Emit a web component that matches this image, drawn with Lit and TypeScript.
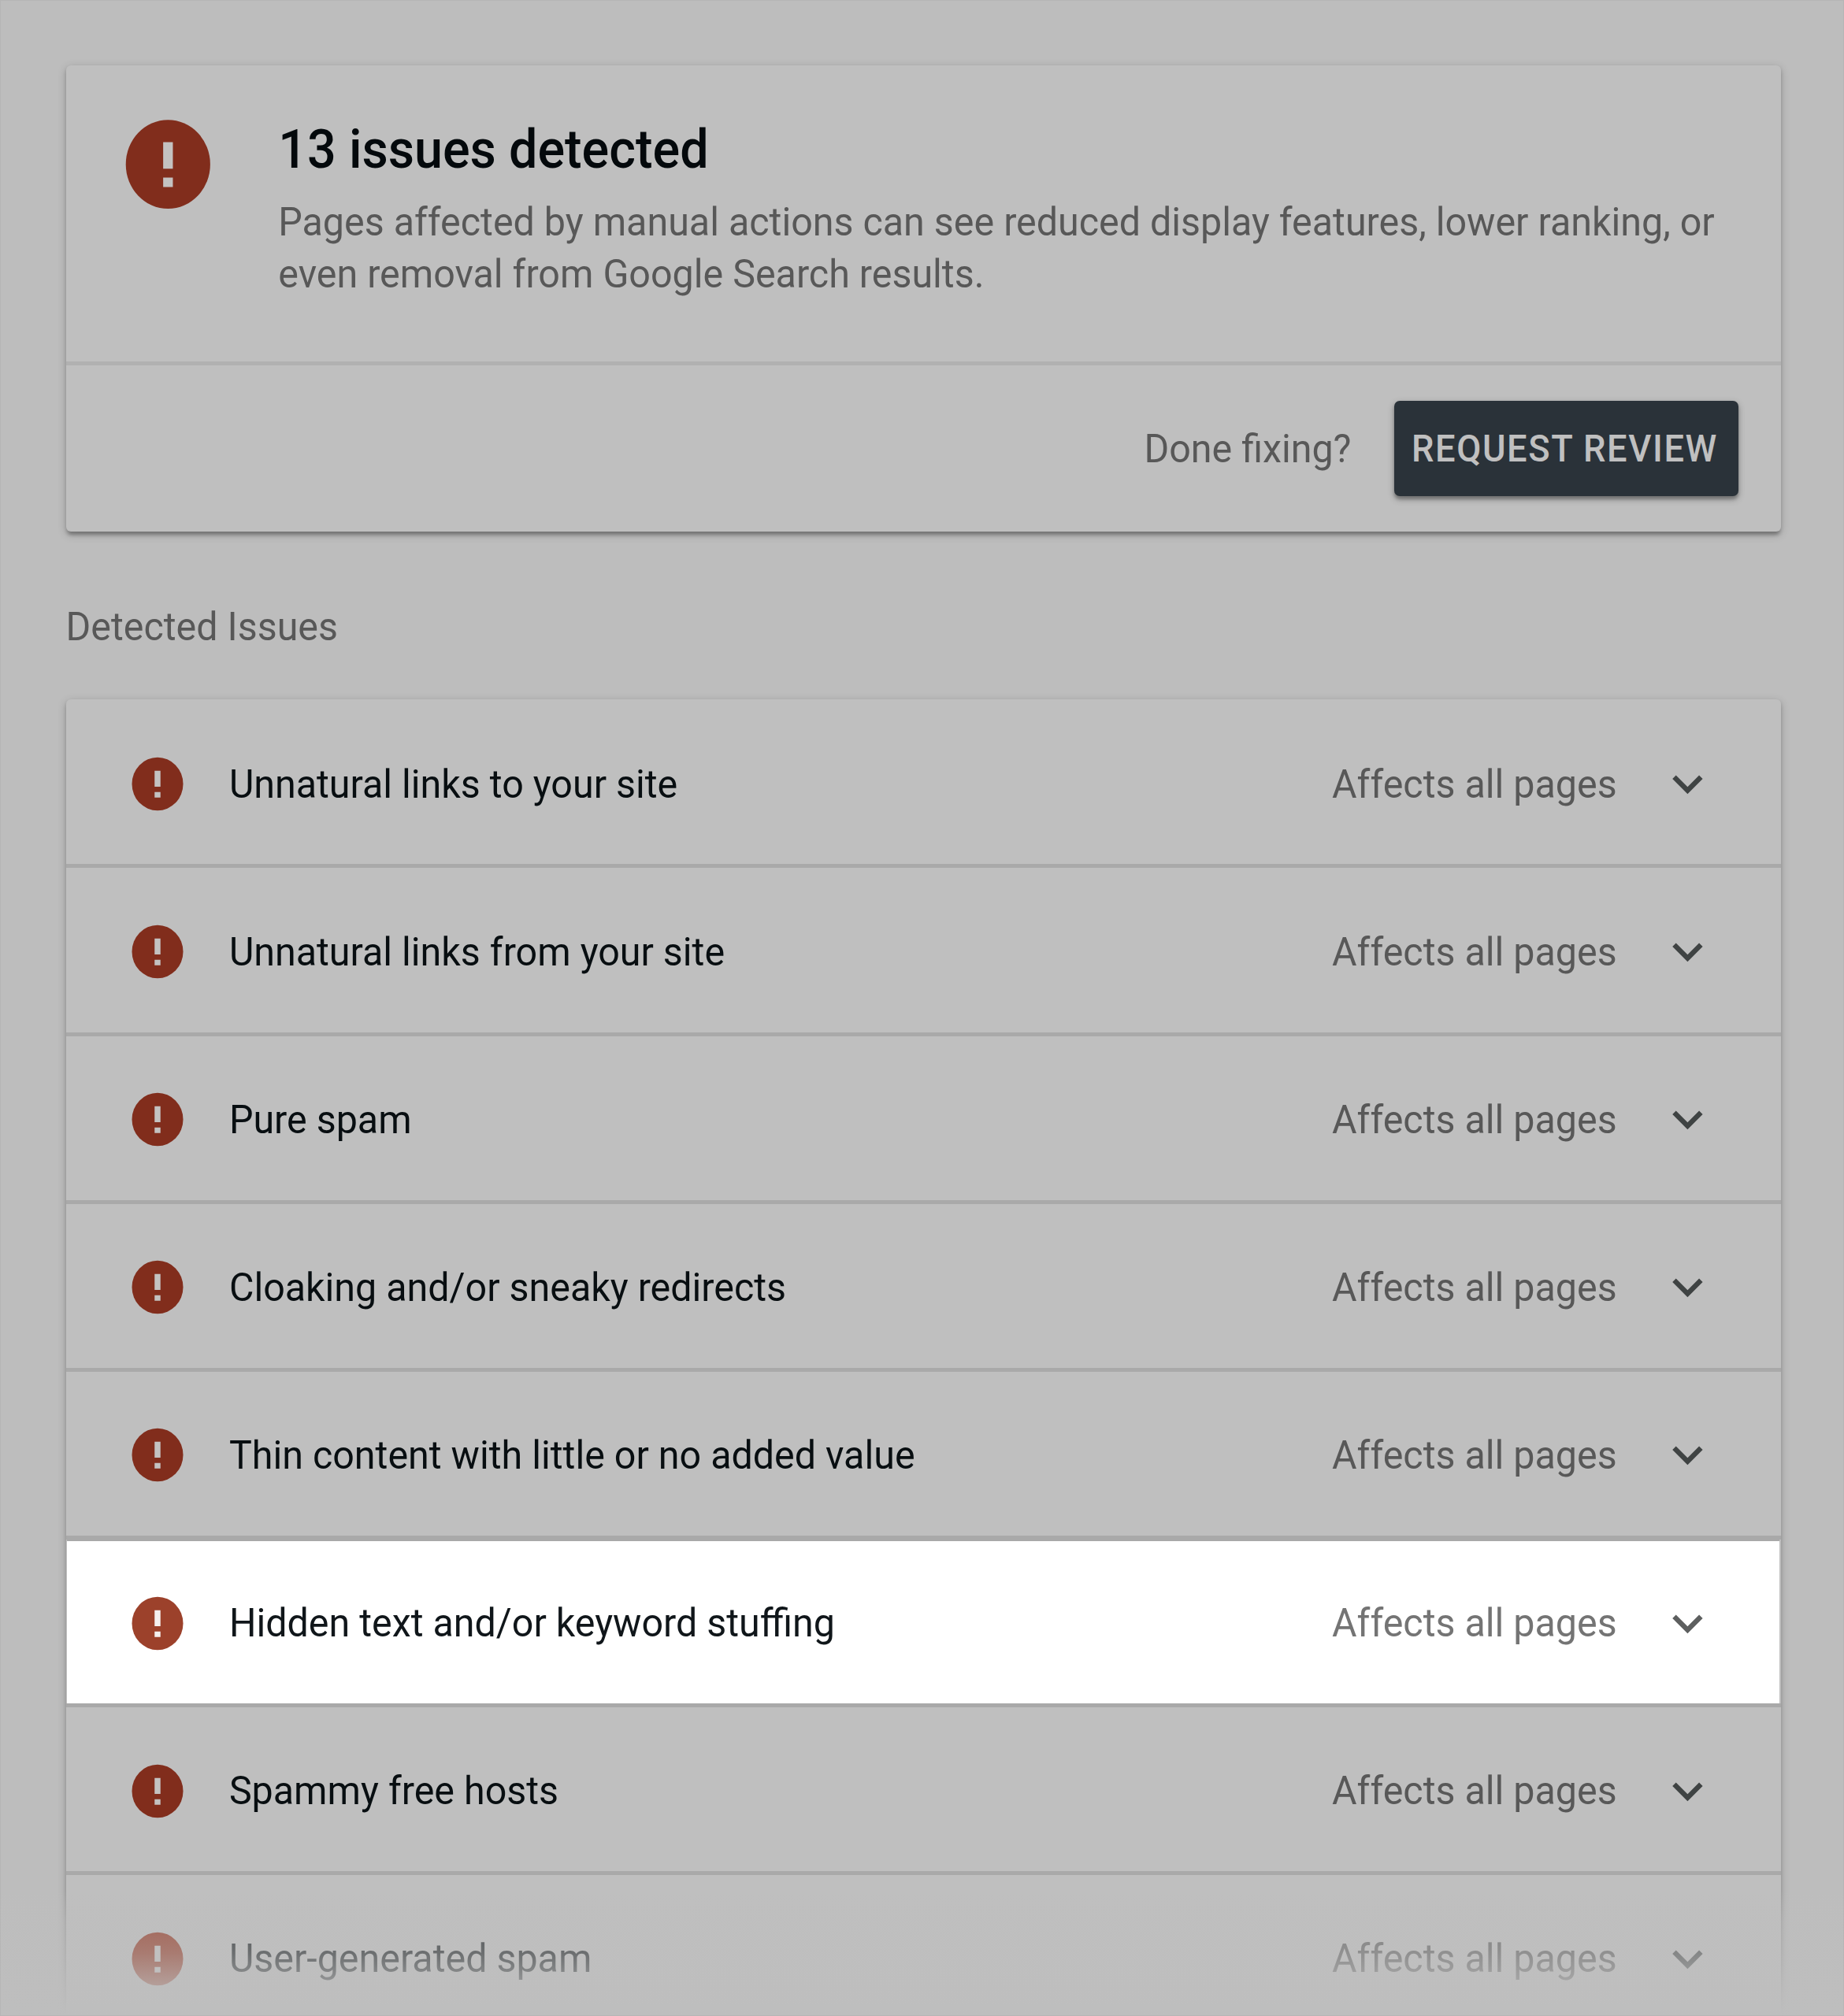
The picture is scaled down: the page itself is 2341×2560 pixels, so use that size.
import { LitElement, html, css } from "lit";
import { customElement, property } from "lit/decorators.js";
import { classMap } from "lit/directives/class-map.js";

interface Issue {
  title: string;
  scope: string;
  highlighted?: boolean;
  fading?: boolean;
}

const ISSUES: Issue[] = [
  { title: "Unnatural links to your site", scope: "Affects all pages" },
  { title: "Unnatural links from your site", scope: "Affects all pages" },
  { title: "Pure spam", scope: "Affects all pages" },
  { title: "Cloaking and/or sneaky redirects", scope: "Affects all pages" },
  { title: "Thin content with little or no added value", scope: "Affects all pages" },
  { title: "Hidden text and/or keyword stuffing", scope: "Affects all pages", highlighted: true },
  { title: "Spammy free hosts", scope: "Affects all pages" },
  { title: "User-generated spam", scope: "Affects all pages", fading: true },
];

@customElement("error-icon")
export class ErrorIcon extends LitElement {
  static styles = css`
    :host {
      display: block;
      flex: none;
    }
    svg {
      display: block;
      width: 100%;
      height: 100%;
    }
    .disc {
      fill: var(--disc, #812d1c);
    }
    .mark {
      fill: var(--mark, #c4c2c1);
    }
  `;

  render() {
    return html`
      <svg viewBox="0 0 24 24" preserveAspectRatio="none" aria-hidden="true">
        <circle class="disc" cx="12" cy="12" r="10" />
        <path class="mark" d="M10.85 7h2.3v6h-2.3zM10.85 15h2.3v2.1h-2.3z" />
      </svg>
    `;
  }
}

@customElement("issue-row")
export class IssueRow extends LitElement {
  @property({ attribute: false }) issue!: Issue;

  static styles = css`
    :host {
      display: block;
      height: 213.1px;
      box-sizing: border-box;
      border-bottom: 5px solid #a9a9a9;
      font-size: 48.4px;
      line-height: 56px;
    }
    .row {
      display: flex;
      align-items: center;
      height: 100%;
      box-sizing: border-box;
      padding: 4.2px 79.3px 0 77.6px;
      color: #080e11;
    }
    error-icon {
      width: 78px;
      height: 81px;
      margin-right: 51.8px;
    }
    .title,
    .scope {
      white-space: nowrap;
      transform: scaleY(1.05);
    }
    .title {
      flex: 1;
    }
    .scope {
      color: #585858;
      margin-right: 51.8px;
    }
    .chevron {
      width: 76.8px;
      height: 77px;
      fill: #3f4343;
    }
    .highlighted {
      --disc: #9c412b;
      --mark: #f4efee;
      color: #10161a;
      background: linear-gradient(#a9a9a9 2px, #fff 2px);
      margin: 0 1.5px;
      padding: 4.2px 77.8px 0 76.1px;
    }
    .highlighted .scope {
      color: #747474;
    }
    .highlighted .chevron {
      fill: #5d5f5f;
    }
    .fading {
      --disc: #8f2a14;
    }
  `;

  render() {
    const { title, scope, highlighted, fading } = this.issue;
    return html`
      <div class=${classMap({ row: true, highlighted: !!highlighted, fading: !!fading })}>
        <error-icon></error-icon>
        <span class="title">${title}</span>
        <span class="scope">${scope}</span>
        <svg class="chevron" viewBox="0 0 24 24" aria-hidden="true">
          <path d="M16.59 8.59 12 13.17 7.41 8.59 6 10l6 6 6-6z" />
        </svg>
      </div>
    `;
  }
}

@customElement("app-root")
export class AppRoot extends LitElement {
  static styles = css`
    :host {
      display: block;
      font-family: Roboto, "Liberation Sans", sans-serif;
    }
    .page {
      position: relative;
      box-sizing: border-box;
      width: 2341px;
      height: 2560px;
      overflow: hidden;
      padding: 83px 80.5px 0 83.5px;
      background: #bdbdbd;
    }
    .card {
      background: #bfbfbf;
      border-radius: 6px;
      box-shadow:
        0 3.5px 4px rgba(0, 0, 0, 0.16),
        0 7px 4px -3px rgba(0, 0, 0, 0.14),
        0 3.5px 12px rgba(0, 0, 0, 0.2);
    }
    .summary {
      height: 592px;
      display: flex;
      flex-direction: column;
    }
    .overview {
      display: flex;
      gap: 76px;
      height: 376px;
      box-sizing: border-box;
      padding: 57.5px 58px 0 65.2px;
    }
    .overview error-icon {
      width: 128.6px;
      height: 135.4px;
    }
    .copy {
      padding-top: 11.4px;
    }
    h1 {
      margin: 0;
      font-size: 64.7px;
      line-height: 76px;
      font-weight: 500;
      color: #04090c;
      transform: scaleY(1.05);
    }
    p {
      margin: 23.8px 0 0;
      font-size: 48.4px;
      line-height: 63.3px;
      color: #585858;
      white-space: nowrap;
      transform: scaleY(1.05);
    }
    .actions {
      flex: 1;
      display: flex;
      align-items: center;
      justify-content: flex-end;
      gap: 54px;
      padding-right: 54px;
      border-top: 5px solid #b1b1b1;
    }
    .hint {
      font-size: 48.4px;
      color: #585858;
      transform: scaleY(1.05);
    }
    button {
      width: 437px;
      height: 120.5px;
      padding: 0 0 0 22.5px;
      border: 0;
      border-radius: 7px;
      background: #2a3239;
      color: #c0c0c0;
      font: 500 45.2px Roboto, "Liberation Sans", sans-serif;
      letter-spacing: 1.6px;
      text-align: left;
      white-space: nowrap;
      box-shadow:
        0 3.5px 3.5px rgba(0, 0, 0, 0.2),
        0 3.5px 9px rgba(0, 0, 0, 0.3);
    }
    .label {
      display: inline-block;
      transform: scaleY(1.05);
    }
    h2 {
      margin: 0;
      height: 213px;
      box-sizing: border-box;
      padding-top: 93px;
      font-size: 48.4px;
      line-height: 56px;
      font-weight: 400;
      color: #585858;
    }
    .list {
      padding-top: 1.4px;
    }
    /* Fades the end of the list into the page. */
    .fade {
      position: absolute;
      left: 0;
      right: 0;
      bottom: 0;
      height: 160px;
      background: linear-gradient(
        rgba(190, 190, 190, 0),
        rgba(190, 190, 190, 0.42) 26%,
        rgba(190, 190, 190, 0.55) 50%,
        rgba(190, 190, 190, 0.78) 75%,
        rgb(190, 190, 190)
      );
    }
    .frame {
      position: absolute;
      inset: 0;
      box-shadow: inset 0 0 0 1px #b6b6b6;
    }
  `;

  render() {
    return html`
      <main class="page">
        <section class="card summary">
          <div class="overview">
            <error-icon></error-icon>
            <div class="copy">
              <h1>13 issues detected</h1>
              <p>
                Pages affected by manual actions can see reduced display features, lower ranking, or<br />even
                removal from Google Search results.
              </p>
            </div>
          </div>
          <div class="actions">
            <span class="hint">Done fixing?</span>
            <button><span class="label">REQUEST REVIEW</span></button>
          </div>
        </section>
        <h2><span class="label">Detected Issues</span></h2>
        <section class="card list">
          ${ISSUES.map((issue) => html`<issue-row .issue=${issue}></issue-row>`)}
        </section>
        <div class="fade"></div>
        <div class="frame"></div>
      </main>
    `;
  }
}
